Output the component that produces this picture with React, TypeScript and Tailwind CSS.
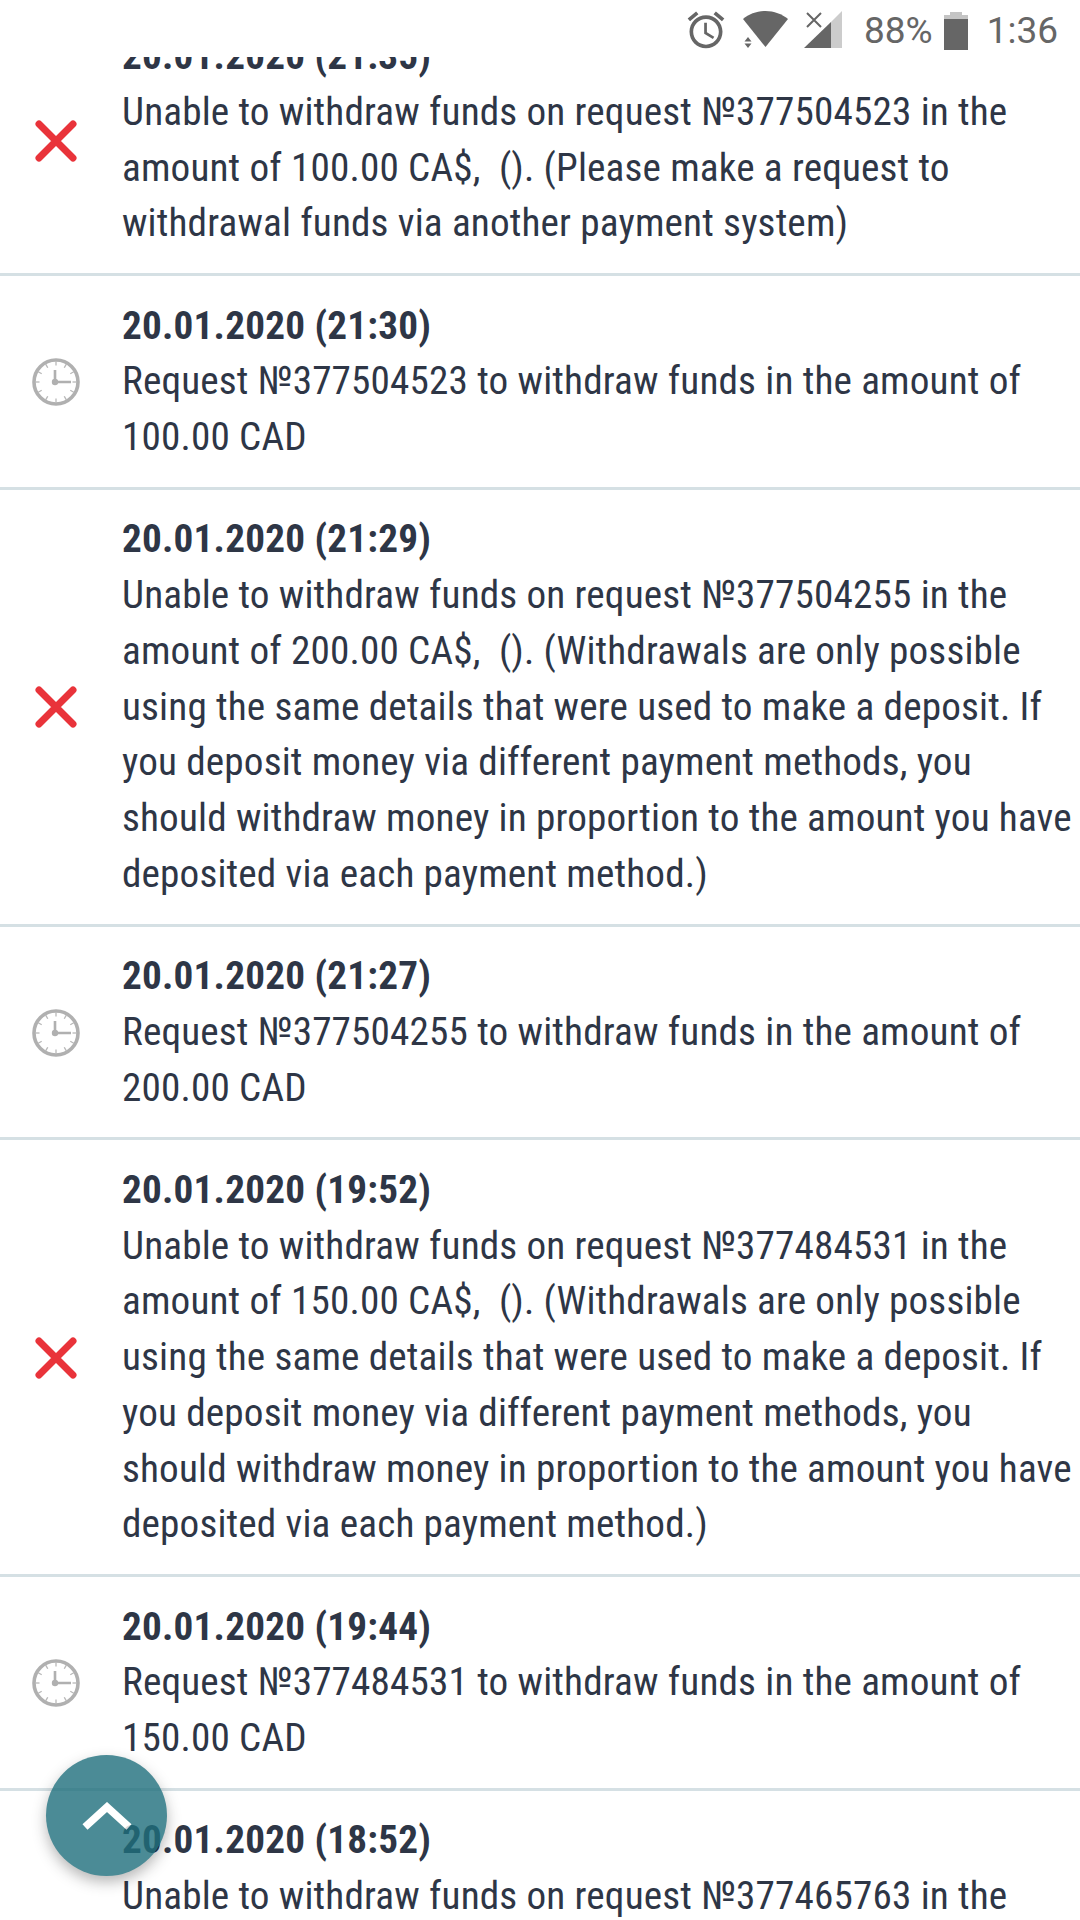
const failedLong = (
  req: string,
  amount: string,
): string[] => [
  `Unable to withdraw funds on request №${req} in the`,
  `amount of ${amount} CA$,  (). (Withdrawals are only possible`,
  "using the same details that were used to make a deposit. If",
  "you deposit money via different payment methods, you",
  "should withdraw money in proportion to the amount you have",
  "deposited via each payment method.)",
];

// "cut" is the row running off the bottom: its icon sits below the fold
type Row = { kind: "failed" | "pending" | "cut"; date: string; lines: string[] };

const rows: Row[] = [
  {
    kind: "failed",
    date: "20.01.2020 (21:35)",
    lines: [
      "Unable to withdraw funds on request №377504523 in the",
      "amount of 100.00 CA$,  (). (Please make a request to",
      "withdrawal funds via another payment system)",
    ],
  },
  {
    kind: "pending",
    date: "20.01.2020 (21:30)",
    lines: ["Request №377504523 to withdraw funds in the amount of", "100.00 CAD"],
  },
  { kind: "failed", date: "20.01.2020 (21:29)", lines: failedLong("377504255", "200.00") },
  {
    kind: "pending",
    date: "20.01.2020 (21:27)",
    lines: ["Request №377504255 to withdraw funds in the amount of", "200.00 CAD"],
  },
  { kind: "failed", date: "20.01.2020 (19:52)", lines: failedLong("377484531", "150.00") },
  {
    kind: "pending",
    date: "20.01.2020 (19:44)",
    lines: ["Request №377484531 to withdraw funds in the amount of", "150.00 CAD"],
  },
  {
    kind: "cut",
    date: "20.01.2020 (18:52)",
    lines: ["Unable to withdraw funds on request №377465763 in the"],
  },
];

function ClockIcon() {
  const ticks = Array.from({ length: 12 }, (_, i) => i * 30);
  return (
    <svg width="48" height="48" viewBox="0 0 48 48" fill="none">
      <circle cx="24" cy="24" r="22" stroke="#b0b0b0" strokeWidth="3.6" />
      {ticks.map((deg) => (
        <line
          key={deg}
          x1="24"
          y1="3"
          x2="24"
          y2="7.500"
          stroke="#b8b8b8"
          strokeWidth="1.3"
          transform={`rotate(${deg} 24 24)`}
        />
      ))}
      <path d="M23 12v12h16" stroke="#b0b0b0" strokeWidth="2.6" />
      <circle cx="23" cy="24" r="3.2" fill="#b0b0b0" />
    </svg>
  );
}

function CrossIcon() {
  return (
    <svg width="42" height="42" viewBox="0 0 42 42" fill="none">
      <path d="M4 4l34 34M38 4L4 38" stroke="#e9333a" strokeWidth="7" strokeLinecap="round" />
    </svg>
  );
}

function StatusBar() {
  return (
    <div className="absolute top-0 left-0 right-0 z-10 flex h-[57px] items-center justify-end bg-white pr-[22px] font-['Roboto',sans-serif] text-[37px] text-[#666666]">
      <svg className="mr-[15px] mt-[3px]" width="44" height="44" viewBox="0 0 24 24" fill="#666666">
        <path d="M22 5.72l-4.6-3.86-1.29 1.53 4.6 3.86L22 5.72zM7.88 3.39L6.6 1.86 2 5.71l1.29 1.53 4.59-3.85zM12.5 8H11v6l4.75 2.85.75-1.23-4-2.37V8zM12 4c-4.97 0-9 4.03-9 9s4.02 9 9 9c4.97 0 9-4.03 9-9s-4.03-9-9-9zm0 16c-3.87 0-7-3.13-7-7s3.13-7 7-7 7 3.13 7 7-3.13 7-7 7z" />
      </svg>
      <svg className="mr-[16px] mt-[3px]" width="45" height="38" viewBox="0 0 45 38" fill="#666666">
        <path d="M0 8C6 3 14 0 22.5 0S39 3 45 8L22.5 36z" />
        <path d="M5 25l3.5 4.500h-7zM5 36l-3.500-4.500h7z" transform="translate(0 1)" />
      </svg>
      <svg className="mr-[22px] mt-[3px]" width="38" height="38" viewBox="0 0 38 38">
        <path d="M38 0v37H27V11z" fill="#cccccc" />
        <path d="M27 11v26H0z" fill="#666666" />
        <path d="M3 2l14 14M17 2L3 16" stroke="#666666" strokeWidth="2" />
      </svg>
      <span className="mr-[11px] mt-[3px] leading-none">88%</span>
      <svg className="mr-[19px] mt-[5px]" width="24" height="38" viewBox="0 0 24 38">
        <path d="M6 0h12v7H6z" fill="#c4c4c4" />
        <path d="M0 3h24v4H0z" fill="#c4c4c4" />
        <path d="M0 7h24v31H0z" fill="#666666" />
      </svg>
      <span className="mt-[3px] leading-none">1:36</span>
    </div>
  );
}

export default function App() {
  return (
    <main className="relative h-[1920px] w-[1080px] overflow-hidden bg-white font-['Roboto',sans-serif] text-[#2e3646]">
      <StatusBar />
      <div className="pt-[6.5px]">
        {rows.map((row) => (
          <div
            key={row.date}
            className="flex items-center border-b-[3px] border-[#d5e0e4] pt-[22.5px] pb-[21px]"
          >
            <div className="flex w-[112px] shrink-0 justify-center">
              {row.kind === "failed" && <CrossIcon />}
              {row.kind === "pending" && <ClockIcon />}
            </div>
            <div className="min-w-0 flex-1 pl-[10px] text-[39.2px] leading-[55.75px] tracking-[0.15px] [font-stretch:75%]">
              <div className="font-bold tracking-[0.2px] whitespace-nowrap">{row.date}</div>
              {row.lines.map((line) => (
                <div key={line} className="whitespace-pre">
                  {line}
                </div>
              ))}
            </div>
          </div>
        ))}
      </div>
      <button className="absolute left-[46px] top-[1755px] flex h-[121px] w-[121px] items-center justify-center rounded-full bg-[#1f6f7c] opacity-80 shadow-[0_6px_14px_rgba(0,0,0,0.35)]">
        <svg width="50" height="28" viewBox="0 0 50 28" fill="none">
          <path d="M3 25L25 5l22 20" stroke="#ffffff" strokeWidth="7.5" />
        </svg>
      </button>
    </main>
  );
}
